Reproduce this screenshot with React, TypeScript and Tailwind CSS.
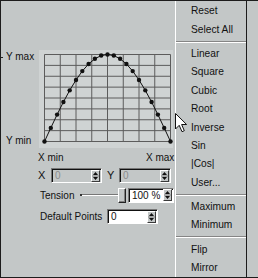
const pts = Array.from({ length: 21 }, (_, i) => [
  5.5 + i * 6.3,
  91.5 - 87 * Math.sin((Math.PI * i) / 20),
]);

const menu: (string | null)[] = [
  'Reset', 'Select All', null,
  'Linear', 'Square', 'Cubic', 'Root', 'Inverse', 'Sin', '|Cos|', 'User...', null,
  'Maximum', 'Minimum', null,
  'Flip', 'Mirror',
];

const Spinner = () => (
  <div className="w-[9px] h-[12px] mr-px flex items-center justify-center border border-t-white border-l-white border-r-[#3a3a3a] border-b-[#3a3a3a] bg-[#c3c7c7]">
    <svg width="7" height="10" viewBox="0 0 7 10">
      <path d="M3.5 1 L1 4 H6 Z M1 6 H6 L3.5 9 Z" fill="#111" />
      <line x1="0" y1="5" x2="7" y2="5" stroke="#7a7a7a" strokeWidth="0.8" />
    </svg>
  </div>
);

const Field = ({ w, value, disabled }: { w: string; value: string; disabled?: boolean }) => (
  <div
    className={`${w} h-[15px] shrink-0 flex items-center border border-t-[#777] border-l-[#777] border-b-white border-r-white shadow-[inset_1px_1px_0_#111] ${
      disabled ? 'bg-[#c3c7c7] text-[#8c8c8c]' : 'bg-white text-[#111]'
    }`}
  >
    <span className="flex-1 pl-[3px] pt-px leading-none whitespace-nowrap">{value}</span>
    <Spinner />
  </div>
);

const Graph = () => (
  <svg width="134" height="98" className="block bg-[#cfd3d3] shrink-0 overflow-visible">
    {Array.from({ length: 9 }, (_, i) => (
      <line key={'v' + i} x1={5.5 + i * 15.75} y1={4.5} x2={5.5 + i * 15.75} y2={91.5} stroke="#5c5c5c" strokeWidth="1" />
    ))}
    {Array.from({ length: 9 }, (_, i) => (
      <line key={'h' + i} x1={5.5} y1={4.5 + i * 10.875} x2={131.5} y2={4.5 + i * 10.875} stroke="#5c5c5c" strokeWidth="1" />
    ))}
    <polyline points={pts.map(p => p.join(',')).join(' ')} fill="none" stroke="#111" strokeWidth="1" />
    {pts.map((p, i) => (
      <circle key={i} cx={p[0]} cy={p[1]} r="2.2" fill="#111" />
    ))}
  </svg>
);

export default function App() {
  return (
    <div className="relative w-[258px] h-[278px] overflow-hidden flex border-t border-l border-b border-[#1c1c1c] bg-[#c3c7c7] text-[10px] text-[#111] font-['Liberation_Sans',Arial,sans-serif]">
      {/* left panel, partly under the menu */}
      <div className="w-[174px] shrink-0 overflow-hidden flex flex-col pt-[49px]">
        <div className="flex h-[98px]">
          <div className="w-[38px] shrink-0 flex flex-col justify-between py-px">
            <div className="flex items-center h-[12px]">
              <span className="w-[2px] h-px bg-[#222]" />
              <span className="ml-[3px] leading-[12px]">Y max</span>
            </div>
            <span className="pl-[5px] leading-[12px]">Y min</span>
          </div>
          <Graph />
        </div>

        <div className="flex items-center h-[18px] pl-[37px] whitespace-nowrap">
          <span className="w-[108px] shrink-0">X min</span>
          <span>X max</span>
        </div>

        <div className="flex items-center h-[15px] mt-[2px] pl-[37px]">
          <span className="w-[13px] shrink-0 text-[11px]">X</span>
          <Field w="w-[51px]" value="0" disabled />
          <span className="ml-[5px] w-[12px] shrink-0 text-[11px]">Y</span>
          <Field w="w-[52px]" value="0" disabled />
        </div>

        <div className="flex items-center h-[16px] mt-[4px] pl-[39px]">
          <span className="w-[40px] shrink-0">Tension</span>
          <div className="w-[38px] shrink-0 flex items-center">
            <span className="w-[2px] h-[2px] bg-[#333]" />
            <div className="flex-1 h-[2px] border-t border-[#777] border-b-white bg-white" />
          </div>
          <div className="w-[8px] h-[15px] shrink-0 border border-t-white border-l-white border-r-[#222] border-b-[#222] bg-[#c3c7c7] shadow-[inset_-1px_-1px_0_#808080]" />
          <div className="ml-[2px]">
            <Field w="w-[46px]" value="100 %" />
          </div>
        </div>

        <div className="flex items-center h-[15px] mt-[6px] pl-[39px]">
          <span className="w-[67px] shrink-0 whitespace-nowrap">Default Points</span>
          <Field w="w-[51px]" value="0" />
        </div>
      </div>

      {/* popup menu */}
      <div className="w-[71px] shrink-0 border-l border-white bg-[#c3c7c7] flex flex-col pt-[0.8px] text-[10.2px]">
        {menu.map((m, i) =>
          m === null ? (
            <div key={i} className="h-[6px] flex flex-col justify-center">
              <div className="h-[2px] border-t border-[#858585] border-b border-b-white" />
            </div>
          ) : (
            <div key={i} className="h-[18.4px] flex items-center pl-[15px] whitespace-nowrap">
              {m}
            </div>
          )
        )}
      </div>
      <div className="w-px shrink-0 bg-[#1c1c1c]" />
      <div className="flex-1 bg-[#c3c7c7]" />

      {/* mouse pointer */}
      <svg width="13" height="20" viewBox="0 0 13 20" className="absolute left-[174px] top-[112px]">
        <path d="M0.5 0.5 L0.5 16 L4.2 12.3 L7 18.7 L9.3 17.7 L6.6 11.5 L11.6 11.5 Z" fill="#fff" stroke="#111" strokeWidth="1" strokeLinejoin="miter" />
      </svg>
    </div>
  );
}
